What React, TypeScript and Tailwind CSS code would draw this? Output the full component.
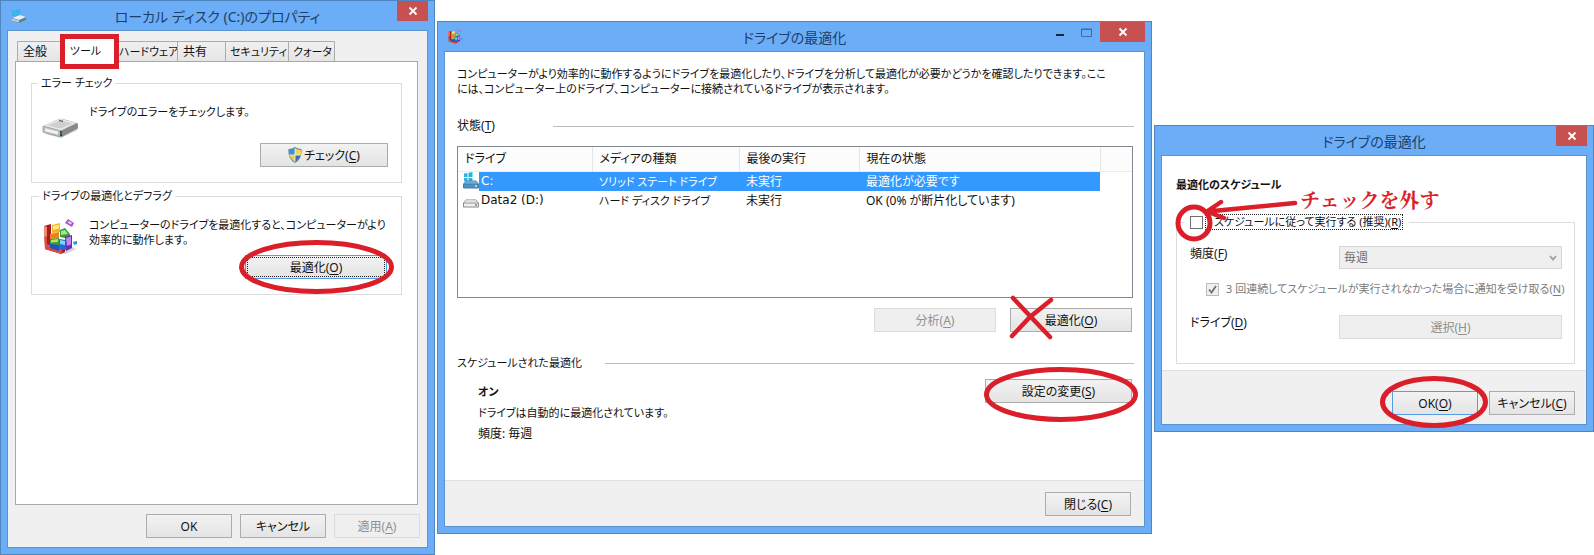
import type { ReactNode } from 'react';

const RED = '#da1f2b';

function Key({ children }: { children: string }) {
  return (
    <>
      (<span className="underline underline-offset-2">{children}</span>)
    </>
  );
}

function Button({
  children,
  className = '',
  disabled = false,
  focused = false,
}: {
  children: ReactNode;
  className?: string;
  disabled?: boolean;
  focused?: boolean;
}) {
  const tone = disabled
    ? 'border-[#dcdcdc] bg-[#efefef] text-[#8f8f8f]'
    : focused
      ? 'border-[#569de5] bg-linear-to-b from-[#f2f2f2] to-[#e4e4e4]'
      : 'border-[#acacac] bg-linear-to-b from-[#f2f2f2] to-[#e4e4e4]';
  return (
    <button
      type="button"
      disabled={disabled}
      className={`flex h-6 shrink-0 items-center justify-center border text-[12px] whitespace-nowrap ${tone} ${className}`}
    >
      {children}
    </button>
  );
}

function CloseGlyph() {
  return (
    <svg width="10" height="10" viewBox="0 0 10 10" aria-hidden="true">
      <path d="M1.5 1.5l7 7M8.5 1.5l-7 7" stroke="#fff" strokeWidth="1.8" />
    </svg>
  );
}

function Window({
  title,
  icon,
  resizable = false,
  className = '',
  children,
}: {
  title: string;
  icon?: ReactNode;
  resizable?: boolean;
  className?: string;
  children: ReactNode;
}) {
  return (
    <section className={`min-w-0 border border-[#4f86bf] bg-[#6badf6] px-[6px] pb-[6px] ${className}`}>
      <header className="relative flex h-[29px] items-start justify-between">
        <span className="pt-[7px] pl-1">{icon}</span>
        <h2 className="absolute inset-x-0 top-[6px] text-center text-[14px] leading-5 text-[#1d3f68]">{title}</h2>
        <div className="relative flex items-start">
          {resizable && (
            <>
              <button type="button" aria-label="最小化" className="flex h-5 w-[26px] items-center justify-center">
                <svg width="10" height="10" viewBox="0 0 10 10" aria-hidden="true">
                  <path d="M1 8h8" stroke="#14253a" strokeWidth="2" />
                </svg>
              </button>
              <button type="button" aria-label="最大化" className="flex h-5 w-[27px] items-center justify-center">
                <svg width="11" height="9" viewBox="0 0 11 9" aria-hidden="true">
                  <path d="M.5 1h10v7.500H.5zM.5 1.500h10" stroke="#3c6da6" fill="none" />
                </svg>
              </button>
            </>
          )}
          <button
            type="button"
            aria-label="閉じる"
            className={`flex h-5 items-center justify-center bg-[#c75050] ${resizable ? 'w-[45px]' : 'w-[31px]'}`}
          >
            <CloseGlyph />
          </button>
        </div>
      </header>
      <div className="border border-[#5b93cf] bg-[#f0f0f0]">{children}</div>
    </section>
  );
}

function DefragIcon({ size }: { size: number }) {
  return (
    <svg width={size} height={size} viewBox="0 0 36 36" aria-hidden="true">
      <path d="M11 32l12 3 10-5-8-4z" fill="#9aa0a8" opacity=".45" />
      <path d="M1 7l7-2v18l14 3v7l-4 2L2 30z" fill="#a81c26" />
      <path d="M1 7l3 1v17l15 5v5L2 30z" fill="#de4a3c" />
      <path d="M1 7l3 1v9l-3 1z" fill="#f08a78" />
      <path d="M9 6l8-2v9l-8 1z" fill="#f3b51e" />
      <path d="M10 7l6-1.500v4L10 11z" fill="#ffe88a" />
      <path d="M7 15l9-2v6l-9 1z" fill="#f07f1c" />
      <path d="M17 11l5-2 5 6v5l-10-2z" fill="#2f9e3b" />
      <path d="M18 12l4-1 3 4-7 1z" fill="#a6e68a" />
      <path d="M7 20l9-1v8l-9-2z" fill="#3f9b34" />
      <path d="M8 21l7-1v3l-7 .5z" fill="#b8e05a" />
      <path d="M7 25l9 1v6l-9-3z" fill="#1b55c0" />
      <path d="M16 20l7 1v10l-7-1z" fill="#1f6ed2" />
      <path d="M17 21l5 1v4l-5-1z" fill="#7fd4f5" />
      <path d="M22 18l7-2v13l-6 3z" fill="#6f2bb0" />
      <path d="M23 19l5-1.500v8L24 27z" fill="#be86ee" />
      <path d="M22 4l3-4 6 4-2 4z" fill="#a355d6" />
      <path d="M24.500 3.500l1.500-1.500 3 2-1 1.500z" fill="#ecd4fb" />
      <path d="M30 23l4-1v3l-3 1z" fill="#2a8fe0" />
    </svg>
  );
}

function DriveIcon() {
  return (
    <svg width="36" height="20" viewBox="0 0 36 20" aria-hidden="true">
      <path d="M3 16l16 4 17-8-3-2z" fill="#9b9b9b" opacity=".35" />
      <path d="M1 8L17 1q2-.6 4 0l14 4q1 .3 1 1.300v4.200L20 19q-1 .5-2 .2L2 15q-1.500-.5-1.500-2V9z" fill="#9b9d9c" />
      <path d="M1.500 7.800L17 1.300q2-.6 4 0L34.500 5 19 12.500z" fill="#e6e8e6" />
      <path d="M6 7.600L18 2.500l12 3-11.500 5z" fill="#cdd0ce" />
      <path d="M1.200 8.500L19 13v5.500L2.500 14.400q-1.300-.4-1.300-1.400z" fill="#b9bcba" />
      <path d="M3 10.200l13 3.200v3L3.800 13.500q-.8-.2-.8-1z" fill="#f1f2f1" />
      <path d="M20 12.800L35.300 5.600v4.700L20 18.300z" fill="#868988" />
      <path d="M18 13l2 .3v5l-2-.5z" fill="#2a2f2c" />
      <path d="M18.500 14.300h1v2.200h-1z" fill="#35c04c" />
      <path d="M17 2.500l4 .9" stroke="#555" strokeWidth="1.200" />
    </svg>
  );
}

function SmallDriveIcon({ system = false }: { system?: boolean }) {
  return (
    <svg width="16" height="18" viewBox="0 0 16 18" aria-hidden="true">
      {system && (
        <path d="M1 1.500l3.500-.5v4H1zM5.500.8L9.500 0v5h-4zM1 6h3.500v3.500L1 9zM5.500 6h4v4l-4-.4z" fill="#2ab3dd" />
      )}
      <path d="M3 8.500h10l3 3.500v3.500q0 1-1 1H1q-1 0-1-1V12z" fill={system ? '#3d7fae' : '#8a8a8a'} />
      <path d="M3.300 9h9.400l2.300 2.700H1z" fill={system ? '#6fabd2' : '#dedede'} />
      <path d="M1 12.500h14v3H1z" fill={system ? '#4f93c2' : '#eeeeee'} />
      <path d="M12 13.200h2v1.500h-2z" fill={system ? '#c8f5d0' : '#4aa257'} />
    </svg>
  );
}

function TitleDriveIcon() {
  return (
    <svg width="16" height="16" viewBox="0 0 16 16" aria-hidden="true">
      <path d="M1 3l3.500-1v3H1zM5 1.800L9 1v4H5zM1 5.500h3.500v3L1 8zM5 5.500h4v3.300l-4-.5z" fill="#35b4ec" />
      <path d="M1 10l8-3 6 2v3l-7 3-7-2z" fill="#5f8297" />
      <path d="M1 10l8-3 6 2-7 3z" fill="#e4f0f5" />
      <path d="M1 10.700l7 1.800v2L1 12.800z" fill="#bfd3dd" />
    </svg>
  );
}

function ShieldIcon() {
  return (
    <svg width="14" height="16" viewBox="0 0 14 16" aria-hidden="true">
      <path d="M7 0q3 2 6.500 2Q14.500 12 7 16-.5 12 .5 2 4 2 7 0z" fill="#6d87a0" />
      <path d="M7 1.200V8H1.300q-.5-2.500-.2-5Q4.500 3 7 1.200z" fill="#3c8fd6" />
      <path d="M7 1.200V8h5.700q.5-2.500.2-5Q9.500 3 7 1.200z" fill="#fbd24c" />
      <path d="M1.500 8H7v6.800Q2.700 12.300 1.500 8z" fill="#f8c93a" />
      <path d="M12.500 8H7v6.800Q11.300 12.300 12.500 8z" fill="#2b75c0" />
      <path d="M7 1.500v13M1.300 8h11.400" stroke="#e9f1f6" strokeWidth=".9" />
    </svg>
  );
}

function Ellipse({ className, width, height }: { className: string; width: number; height: number }) {
  return (
    <svg
      className={`pointer-events-none absolute ${className}`}
      width={width}
      height={height}
      viewBox={`0 0 ${width} ${height}`}
      aria-hidden="true"
    >
      <ellipse
        cx={width / 2}
        cy={height / 2}
        rx={width / 2 - 2.5}
        ry={height / 2 - 2.5}
        fill="none"
        stroke={RED}
        strokeWidth="5"
      />
    </svg>
  );
}

function Tab({ children, className = '' }: { children: string; className?: string }) {
  return (
    <button
      type="button"
      role="tab"
      aria-selected="false"
      className={`h-5 border border-b-0 border-[#acacac] bg-linear-to-b from-[#f0f0f0] to-[#e5e5e5] text-left whitespace-nowrap ${className}`}
    >
      {children}
    </button>
  );
}

function PropertiesWindow() {
  return (
    <Window title="ローカル ディスク (C:)のプロパティ" icon={<TitleDriveIcon />}>
      <div className="pt-2 pr-[7px] pb-[9px] pl-[7px] text-[11px]">
        <div role="tablist" className="flex items-end pl-[2px]">
          <Tab className="w-[44px] pl-[5px] text-[12px]">全般</Tab>
          <button
            type="button"
            role="tab"
            aria-selected="true"
            className="relative flex h-[22px] w-[57px] justify-center bg-white pt-1 whitespace-nowrap"
          >
            <span className="relative z-10 pr-2">ツール</span>
            <span className="absolute -top-[5px] -left-px h-[35px] w-[59px] border-5 border-[#da1f2b] bg-white" />
          </button>
          <Tab className="w-[60px]">ハードウェア</Tab>
          <Tab className="-ml-px w-[49px] pl-[5px] text-[12px]">共有</Tab>
          <Tab className="-ml-px w-[64px] pl-1">セキュリティ</Tab>
          <Tab className="-ml-px w-[47px] pl-1">クォータ</Tab>
        </div>
        <div role="tabpanel" className="mr-[2px] min-h-[444px] border border-[#a8a8a8] bg-white px-[15px] pt-[13px]">
          <fieldset className="min-w-0 border border-[#dcdcdc] pr-[13px] pb-[15px] pl-[10px]">
            <legend className="-ml-[4px] px-[3px] leading-4">エラー チェック</legend>
            <div className="flex gap-[11px] pt-[13px]">
              <span className="pt-[14px]">
                <DriveIcon />
              </span>
              <p className="whitespace-nowrap">ドライブのエラーをチェックします。</p>
            </div>
            <div className="mt-[5px] flex justify-end">
              <Button className="w-[128px] gap-[2px]">
                <ShieldIcon />
                <span>
                  チェック
                  <Key>C</Key>
                </span>
              </Button>
            </div>
          </fieldset>
          <fieldset className="mt-[5px] min-w-0 border border-[#dcdcdc] pr-[14px] pb-[15px] pl-[11px]">
            <legend className="-ml-[4px] px-[3px] leading-4">ドライブの最適化とデフラグ</legend>
            <div className="flex gap-[10px] pt-[13px]">
              <span className="shrink-0 pt-[2px]">
                <DefragIcon size={36} />
              </span>
              <p className="whitespace-nowrap">
                コンピューターのドライブを最適化すると、コンピューターがより
                <br />
                効率的に動作します。
              </p>
            </div>
            <div className="flex justify-end">
              <div className="relative">
                <Button focused className="w-[142px] p-px">
                  <span className="flex h-full w-full items-center justify-center border border-dotted border-[#222]">
                    最適化
                    <Key>O</Key>
                  </span>
                </Button>
                <Ellipse className="-top-[15px] -left-[6px]" width={155} height={54} />
              </div>
            </div>
          </fieldset>
        </div>
        <div className="mt-[9px] flex justify-end gap-2">
          <Button className="w-[86px]">OK</Button>
          <Button className="w-[86px]">キャンセル</Button>
          <Button className="w-[86px]" disabled>
            適用
            <Key>A</Key>
          </Button>
        </div>
      </div>
    </Window>
  );
}

function SectionRule({ children, wide = false }: { children: ReactNode; wide?: boolean }) {
  return (
    <div className="flex items-center leading-4">
      <h3 className={`whitespace-nowrap ${wide ? 'w-[148px] text-[11px]' : 'w-[96px]'}`}>{children}</h3>
      <span className="h-px flex-1 bg-[#bdbdbd]" />
    </div>
  );
}

const headers = ['ドライブ', 'メディアの種類', '最後の実行', '現在の状態'];

const drives = [
  { name: 'C:', media: 'ソリッド ステート ドライブ', last: '未実行', state: '最適化が必要です', system: true },
  { name: 'Data2 (D:)', media: 'ハード ディスク ドライブ', last: '未実行', state: 'OK (0% が断片化しています)', system: false },
];

function OptimizeWindow() {
  return (
    <Window title="ドライブの最適化" icon={<DefragIcon size={15} />} resizable className="mt-[21px]">
      <div className="bg-white pt-[14px] pr-[10px] pb-[38px] pl-3">
        <p className="text-[11px] whitespace-nowrap">
          コンピューターがより効率的に動作するようにドライブを最適化したり、ドライブを分析して最適化が必要かどうかを確認したりできます。ここ
          <br />
          には、コンピューター上のドライブ、コンピューターに接続されているドライブが表示されます。
        </p>
        <div className="mt-[22px]">
          <SectionRule>
            状態
            <Key>T</Key>
          </SectionRule>
        </div>
        <div className="mt-3 mr-px min-h-[152px] border border-[#828790]">
          <table className="w-full table-fixed border-collapse text-left">
            <colgroup>
              <col className="w-[134px]" />
              <col className="w-[147px]" />
              <col className="w-[120px]" />
              <col />
              <col className="w-[32px]" />
            </colgroup>
            <thead>
              <tr className="h-6 border-b border-[#ececec] bg-[#fcfcfc]">
                {headers.map((h) => (
                  <th key={h} className="border-r border-[#e5e5e5] py-0 pl-[7px] font-normal whitespace-nowrap">
                    {h}
                  </th>
                ))}
                <th />
              </tr>
            </thead>
            <tbody>
              {drives.map((d) => {
                const cell = d.system ? 'bg-[#3399ff] text-white' : '';
                return (
                  <tr key={d.name} className="h-[19px] whitespace-nowrap">
                    <td className="p-0 pl-[5px]">
                      <div className="flex h-[19px] items-center">
                        <SmallDriveIcon system={d.system} />
                        <span
                          className={`flex h-full flex-1 items-center pl-[2px] font-['DejaVu_Sans','Noto_Sans_CJK_JP',sans-serif] ${cell}`}
                        >
                          {d.name}
                        </span>
                      </div>
                    </td>
                    <td className={`p-0 pl-[7px] text-[11px] ${cell}`}>{d.media}</td>
                    <td className={`p-0 pl-[7px] ${cell}`}>{d.last}</td>
                    <td className={`p-0 pl-[7px] ${cell}`}>{d.state}</td>
                    <td />
                  </tr>
                );
              })}
            </tbody>
          </table>
        </div>
        <div className="mt-[10px] flex justify-end gap-[14px] pr-[2px]">
          <Button className="w-[122px]" disabled>
            分析
            <Key>A</Key>
          </Button>
          <div className="relative">
            <Button className="w-[122px]">
              最適化
              <Key>O</Key>
            </Button>
            <svg
              className="pointer-events-none absolute -top-[14px] -left-px"
              width="46"
              height="46"
              viewBox="0 0 46 46"
              aria-hidden="true"
            >
              <path d="M4 4l37 39M3 42l18-19L42 6" stroke={RED} strokeWidth="4.500" strokeLinecap="round" fill="none" />
            </svg>
          </div>
        </div>
        <div className="mt-[23px]">
          <SectionRule wide>スケジュールされた最適化</SectionRule>
        </div>
        <div className="flex justify-between pr-[2px] pl-[21px]">
          <div className="flex flex-col gap-[5px] pt-[13px] leading-4 whitespace-nowrap">
            <strong className="text-[11px]">オン</strong>
            <p className="text-[11px]">ドライブは自動的に最適化されています。</p>
            <p>頻度: 毎週</p>
          </div>
          <div className="relative mt-2 self-start">
            <Button className="w-[147px]">
              設定の変更
              <Key>S</Key>
            </Button>
            <Ellipse className="-top-[12px] -left-[1px]" width={154} height={55} />
          </div>
        </div>
      </div>
      <div className="flex justify-end border-t border-[#dfdfdf] pt-[11px] pr-[13px] pb-[10px]">
        <Button className="w-[86px]">
          閉じる
          <Key>C</Key>
        </Button>
      </div>
    </Window>
  );
}

function ScheduleWindow() {
  return (
    <Window title="ドライブの最適化" className="mt-[125px]">
      <div className="bg-white pt-[21px] pr-[11px] pb-[6px] pl-[14px]">
        <h3 className="text-[11px] leading-4 font-bold">最適化のスケジュール</h3>
        <fieldset className="mt-[21px] min-w-0 border border-[#dcdcdc] pr-3 pb-6 pl-[13px]">
          <legend className="-ml-[6px] pr-[6px] pl-[6px] leading-4">
            <div className="relative flex items-center gap-[2px]">
              <input
                id="run-on-schedule"
                type="checkbox"
                className="h-[13px] w-[13px] appearance-none border border-[#707070] bg-white"
              />
              <label
                htmlFor="run-on-schedule"
                className="flex h-4 items-center border border-dotted border-[#222] pr-px pl-[8px] text-[11px] whitespace-nowrap"
              >
                スケジュールに従って実行する (推奨)
                <Key>R</Key>
              </label>
              <svg
                className="pointer-events-none absolute -top-[19px] -left-[20px]"
                width="130"
                height="50"
                viewBox="0 0 130 50"
                aria-hidden="true"
              >
                <circle cx="24" cy="28" r="16" fill="none" stroke={RED} strokeWidth="5" />
                <path d="M125 8L38 16.500M51 7L37 16.500 54 23" stroke={RED} strokeWidth="4.500" strokeLinecap="round" fill="none" />
              </svg>
              <span className="pointer-events-none absolute -top-[23px] left-[110px] font-['Liberation_Serif','Noto_Serif_CJK_JP',serif] text-[20px] leading-5 font-bold whitespace-nowrap text-[#da1f2b] [font-feature-settings:normal]">
                チェックを外す
              </span>
            </div>
          </legend>
          <div className="flex pt-4">
            <label htmlFor="frequency" className="w-[149px] leading-4">
              頻度
              <Key>F</Key>
            </label>
            <div className="relative min-w-0 flex-1">
              <select
                id="frequency"
                disabled
                className="block h-[23px] w-full appearance-none border border-[#d6d6d6] bg-[#efefef] pl-1 text-[#707070] opacity-100"
              >
                <option>毎週</option>
              </select>
              <svg
                className="pointer-events-none absolute top-[9px] right-[5px]"
                width="8"
                height="7"
                viewBox="0 0 8 7"
                aria-hidden="true"
              >
                <path d="M1 1l3 3.500L7 1" stroke="#a0a0a0" strokeWidth="1.800" fill="none" />
              </svg>
            </div>
          </div>
          <div className="mt-3 flex items-center pl-4 text-[#7c7c7c]">
            <span className="relative flex">
              <input
                id="notify"
                type="checkbox"
                defaultChecked
                disabled
                className="h-[13px] w-[13px] appearance-none border border-[#bcbcbc] bg-[#f0f0f0]"
              />
              <svg
                className="pointer-events-none absolute top-[2px] left-[2px]"
                width="9"
                height="9"
                viewBox="0 0 9 9"
                aria-hidden="true"
              >
                <path d="M1 4.500l2.500 3L8 1" stroke="#707070" strokeWidth="1.800" fill="none" />
              </svg>
            </span>
            <label htmlFor="notify" className="pl-[7px] text-[11px] leading-4 whitespace-nowrap">
              3 回連続してスケジュールが実行されなかった場合に通知を受け取る
              <Key>N</Key>
            </label>
          </div>
          <div className="mt-[18px] flex">
            <span className="w-[149px] leading-4">
              ドライブ
              <Key>D</Key>
            </span>
            <Button className="flex-1" disabled>
              選択
              <Key>H</Key>
            </Button>
          </div>
        </fieldset>
      </div>
      <div className="flex justify-end gap-[11px] border-t border-[#dfdfdf] pt-5 pr-[11px] pb-[9px]">
        <div className="relative">
          <Button className="w-[86px]" focused>
            OK
            <Key>O</Key>
          </Button>
          <Ellipse className="-top-[15px] -left-[12px]" width={108} height={52} />
        </div>
        <Button className="w-[86px]">
          キャンセル
          <Key>C</Key>
        </Button>
      </div>
    </Window>
  );
}

export default function App() {
  return (
    <main className="grid grid-cols-[435fr_715fr_440fr] items-start gap-x-[2px] bg-white font-['Noto_Sans','Noto_Sans_CJK_JP',sans-serif] text-[12px] leading-[15px] text-[#111] [font-feature-settings:'palt']">
      <PropertiesWindow />
      <OptimizeWindow />
      <ScheduleWindow />
    </main>
  );
}
